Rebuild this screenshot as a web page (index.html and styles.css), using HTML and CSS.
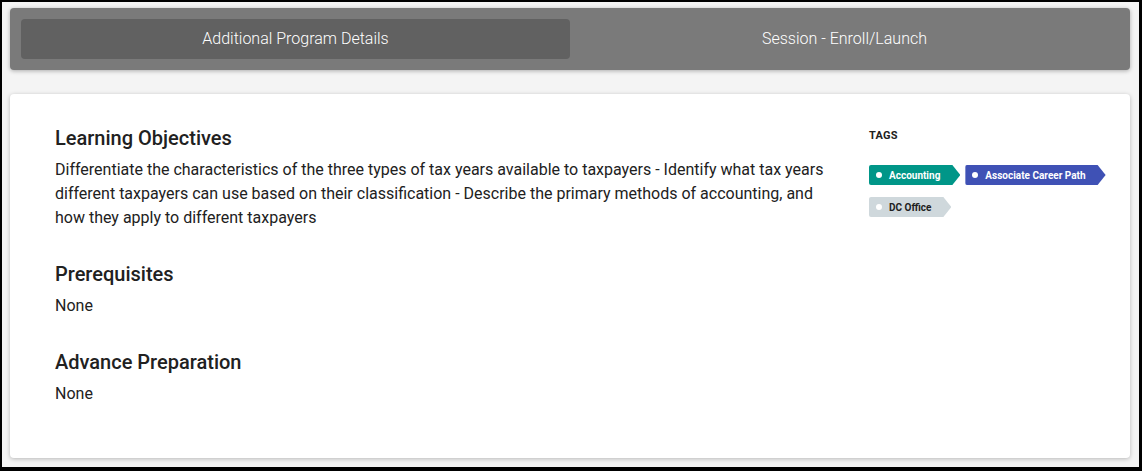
FILE: index.html
```html
<!DOCTYPE html>
<html>
<head>
<meta charset="utf-8">
<link rel="stylesheet" href="styles.css">
</head>
<body>
<div class="frame">
  <div class="tabbar">
    <div class="tab active">Additional Program Details</div>
    <div class="tab">Session - Enroll/Launch</div>
  </div>
  <div class="card">
    <div class="main">
      <section class="sec">
        <h2 class="heading">Learning Objectives</h2>
        <p class="text">Differentiate the characteristics of the three types of tax years available to taxpayers - Identify what tax years different taxpayers can use based on their classification - Describe the primary methods of accounting, and how they apply to different taxpayers</p>
      </section>
      <section class="sec">
        <h2 class="heading">Prerequisites</h2>
        <p class="text">None</p>
      </section>
      <section class="sec">
        <h2 class="heading">Advance Preparation</h2>
        <p class="text">None</p>
      </section>
    </div>
    <aside class="side">
      <div class="tags-label">TAGS</div>
      <div class="tags">
        <span class="tag teal"><span class="dot"></span>Accounting</span>
        <span class="tag indigo"><span class="dot"></span>Associate Career Path</span>
        <span class="tag grey"><span class="dot"></span>DC Office</span>
      </div>
    </aside>
  </div>
</div>
</body>
</html>
```
FILE: styles.css
```css
* { box-sizing: border-box; }
html, body { margin: 0; padding: 0; }
body {
  width: 1142px;
  height: 471px;
  background: #000;
  font-family: Roboto, "Noto Sans", sans-serif;
  overflow: hidden;
}
.frame {
  margin: 2px 3px 4px 2px;
  height: 465px;
  background: #f4f4f4;
  padding: 6px 9px 0 8px;
}
.tabbar {
  background: #7a7a7a;
  border-radius: 4px;
  height: 62px;
  padding: 11px;
  display: flex;
  box-shadow: 0 1px 4px rgba(0,0,0,0.3);
}
.tab {
  flex: 1;
  display: flex;
  align-items: center;
  justify-content: center;
  padding-bottom: 2px;
  color: #fff;
  font-size: 16px;
  font-weight: 300;
  border-radius: 4px;
}
.tab.active { background: #616161; }
.card {
  margin-top: 24px;
  background: #fff;
  border-radius: 4px;
  height: 364px;
  box-shadow: 0 1px 4px rgba(0,0,0,0.25);
  display: flex;
  gap: 34px;
  padding: 30px 21px 0 45px;
}
.main { flex: 1; }
.sec { margin-bottom: 30px; }
.heading {
  margin: 0 0 6px;
  font-size: 20px;
  font-weight: 500;
  line-height: 28px;
  color: #212121;
}
.text {
  margin: 0;
  font-size: 16px;
  line-height: 24px;
  color: #212121;
}
.side { width: 240px; padding-top: 5px; }
.tags-label {
  font-size: 11px;
  font-weight: 700;
  color: #212121;
  letter-spacing: 0.2px;
}
.tags {
  margin-top: 23px;
  display: flex;
  flex-wrap: wrap;
  gap: 12px 5px;
}
.tag {
  display: inline-flex;
  align-items: center;
  height: 20px;
  padding: 0 20px 0 7px;
  font-size: 10px;
  font-weight: 700;
  color: #fff;
  clip-path: polygon(0 0, calc(100% - 8px) 0, 100% 50%, calc(100% - 8px) 100%, 0 100%);
  border-radius: 2px 0 0 2px;
}
.dot {
  width: 6px; height: 6px; border-radius: 50%;
  background: #fff;
  margin-right: 7px;
}
.teal { background: #009688; }
.indigo { background: #3f51b5; }
.grey { background: #cfd8dc; color: #212121; }
.grey .dot { background: #fff; }
```
